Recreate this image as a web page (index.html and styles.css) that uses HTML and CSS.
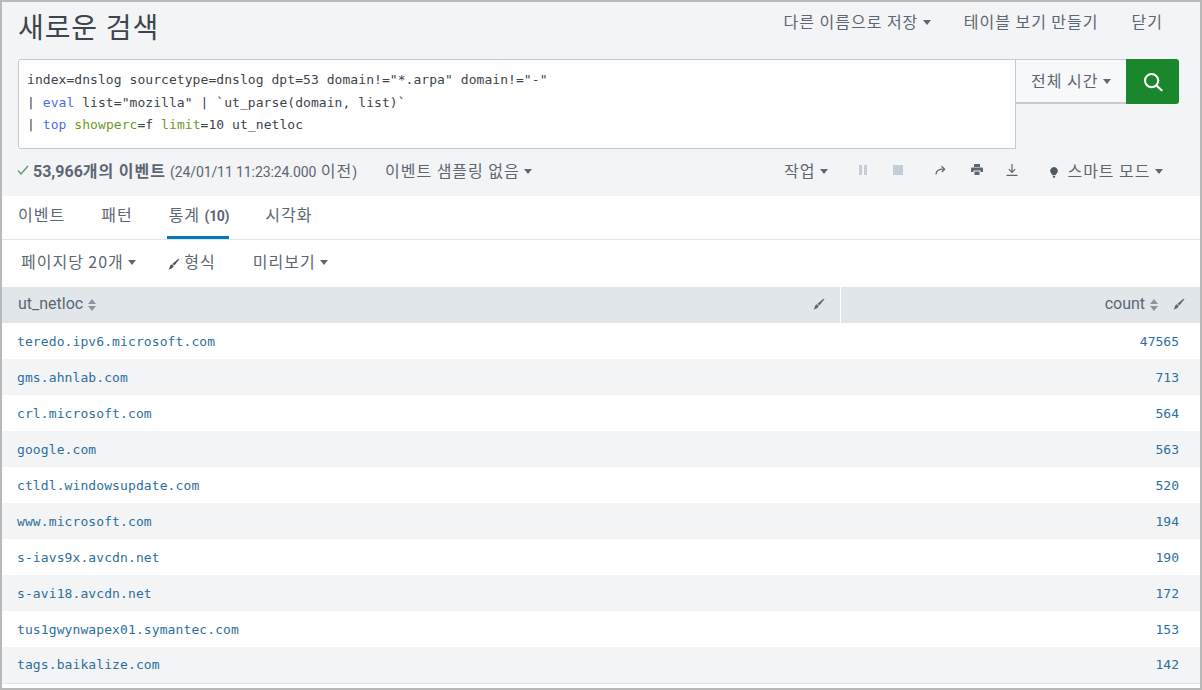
FILE: index.html
```html
<!DOCTYPE html>
<html lang="ko">
<head>
<meta charset="utf-8">
<title>새로운 검색</title>
<link rel="stylesheet" href="styles.css">
</head>
<body>
<div class="frame">
  <section class="top">
    <header class="title-row">
      <h1 class="title">새로운 검색</h1>
      <nav class="title-menu">
        <span class="menu-item">다른 이름으로 저장 <i class="caret"></i></span>
        <span class="menu-item">테이블 보기 만들기</span>
        <span class="menu-item">닫기</span>
      </nav>
    </header>
    <div class="search-row">
      <div class="query">
        <div class="qline">index=dnslog sourcetype=dnslog dpt=53 domain!="*.arpa" domain!="-"</div>
        <div class="qline">| <span class="kw">eval</span> list="mozilla" | `ut_parse(domain, list)`</div>
        <div class="qline">| <span class="kw">top</span> <span class="arg">showperc</span>=f <span class="arg">limit</span>=10 ut_netloc</div>
      </div>
      <div class="time-btn">전체 시간 <i class="caret"></i></div>
      <div class="go-btn">
        <svg width="20" height="20" viewBox="0 0 20 20" fill="none" stroke="#fff" stroke-width="2.2" stroke-linecap="round"><circle cx="8.6" cy="8.6" r="6.6"/><path d="M13.6 13.6 18.6 18.2"/></svg>
      </div>
    </div>
    <div class="status-row">
      <div class="status-left">
        <svg class="check" width="12" height="10" viewBox="0 0 12 10" fill="none" stroke="#5a9a62" stroke-width="1.3"><path d="M1 5.5 4 9 11 1"/></svg>
        <b class="count"><span class="en">53,966</span>개의 이벤트</b>
        <span class="stamp"><span class="en">(24/01/11 11:23:24.000</span> 이전<span class="en">)</span></span>
        <span class="sampling">이벤트 샘플링 없음 <i class="caret"></i></span>
      </div>
      <div class="status-right">
        <span class="job">작업 <i class="caret"></i></span>
        <svg class="tool t-pause" width="10" height="10" viewBox="0 0 10 10" fill="#c3cdd7"><rect x="1" y="0" width="3" height="10"/><rect x="6" y="0" width="3" height="10"/></svg>
        <svg class="tool t-stop" width="10" height="10" viewBox="0 0 10 10" fill="#c3cdd7"><rect width="10" height="10"/></svg>
        <svg class="tool t-share" width="11" height="10" viewBox="0 0 11 10" fill="none" stroke="#5c6773" stroke-width="1.3"><path d="M1 9.5C1 6 3.500 4.200 8.500 4.200"/><path d="M6.500 1.300 9.600 4.200 6.800 7" /></svg>
        <svg class="tool t-print" width="12" height="11" viewBox="0 0 12 11" fill="#5c6773"><path d="M3 0h6v3H3zM1 3.500h10a1 1 0 0 1 1 1V8h-2.500V6.500h-7V8H0V4.500a1 1 0 0 1 1-1zM3.500 7.500h5V11h-5z"/></svg>
        <svg class="tool t-down" width="12" height="12" viewBox="0 0 12 12" fill="none" stroke="#5c6773" stroke-width="1.200"><path d="M6 0v8M2.800 5.200 6 8.500l3.200-3.300M0.500 11.300h11"/></svg>
        <span class="mode">
          <svg width="8" height="11" viewBox="0 0 8 11" fill="#4e5863"><path d="M4 0a3.800 3.800 0 0 1 2.200 6.900L5.500 8h-3l-.7-1.100A3.800 3.800 0 0 1 4 0zM2.700 8.800h2.600L4.800 10.800H3.200z"/></svg>
          스마트 모드 <i class="caret"></i>
        </span>
      </div>
    </div>
  </section>

  <nav class="tabs">
    <span class="tab">이벤트</span>
    <span class="tab">패턴</span>
    <span class="tab active">통계 <b class="en tab-num">(10)</b></span>
    <span class="tab">시각화</span>
  </nav>

  <div class="controls">
    <span class="ctl">페이지당 20개 <i class="caret"></i></span>
    <span class="ctl ctl-format">
      <svg class="brush" width="12" height="12" viewBox="0 0 12 12" fill="#4e5863"><path d="M11.500.5c.4.4-3.500 5.200-5.300 6.900L4.600 5.800C6.300 4 11.100.1 11.500.500zM4.100 6.300l1.600 1.600C5.300 9.800 3 11 .5 11.500c1.300-1 1-2.600 1.800-3.900.4-.7 1.100-1 1.800-1.300z"/></svg>형식</span>
    <span class="ctl ctl-preview">미리보기 <i class="caret"></i></span>
  </div>

  <table class="grid">
    <colgroup><col class="col-a"><col></colgroup>
    <thead>
      <tr>
        <th class="th-left">
          <div class="th-inner"><span>ut_netloc <i class="sort"></i></span>
          <svg class="brush" width="12" height="12" viewBox="0 0 12 12" fill="#5c6773"><path d="M11.500.5c.4.4-3.500 5.200-5.300 6.900L4.600 5.800C6.300 4 11.100.1 11.500.500zM4.100 6.300l1.600 1.600C5.300 9.800 3 11 .5 11.500c1.300-1 1-2.600 1.800-3.900.4-.7 1.100-1 1.800-1.300z"/></svg></div>
        </th>
        <th class="th-right">
          <div class="th-inner th-end"><span>count <i class="sort"></i></span>
          <svg class="brush" width="12" height="12" viewBox="0 0 12 12" fill="#5c6773"><path d="M11.500.5c.4.4-3.500 5.200-5.300 6.900L4.600 5.800C6.300 4 11.100.1 11.500.500zM4.100 6.300l1.600 1.600C5.300 9.800 3 11 .5 11.500c1.300-1 1-2.600 1.800-3.900.4-.7 1.100-1 1.800-1.300z"/></svg></div>
        </th>
      </tr>
    </thead>
    <tbody>
      <tr><td>teredo.ipv6.microsoft.com</td><td class="num">47565</td></tr>
      <tr><td>gms.ahnlab.com</td><td class="num">713</td></tr>
      <tr><td>crl.microsoft.com</td><td class="num">564</td></tr>
      <tr><td>google.com</td><td class="num">563</td></tr>
      <tr><td>ctldl.windowsupdate.com</td><td class="num">520</td></tr>
      <tr><td>www.microsoft.com</td><td class="num">194</td></tr>
      <tr><td>s-iavs9x.avcdn.net</td><td class="num">190</td></tr>
      <tr><td>s-avi18.avcdn.net</td><td class="num">172</td></tr>
      <tr><td>tus1gwynwapex01.symantec.com</td><td class="num">153</td></tr>
      <tr><td>tags.baikalize.com</td><td class="num">142</td></tr>
    </tbody>
  </table>
</div>
</body>
</html>
```
FILE: styles.css
```css
* { box-sizing: border-box; }
html, body { margin: 0; padding: 0; background: #fff; }
body {
  width: 1202px;
  height: 690px;
  overflow: hidden;
  font-family: "Noto Sans CJK KR", sans-serif;
  font-size: 16px;
  letter-spacing: 1px;
  word-spacing: -1px;
  color: #5c6773;
}
.en { font-family: Roboto, sans-serif; font-size: 14px; letter-spacing: 0; word-spacing: 0; }
.frame {
  width: 1202px;
  height: 690px;
  border: 2px solid #b9b9b9;
  background: #fff;
  overflow: hidden;
}
.top { background: #f2f4f5; height: 194px; }
.title-row {
  display: flex;
  justify-content: space-between;
  align-items: flex-start;
  height: 57px;
  padding: 0 37px 0 16px;
}
.title {
  margin: 5px 0 0;
  font-size: 28px;
  line-height: 38px;
  font-weight: 400;
  letter-spacing: 0.900px;
  color: #3c444d;
}
.title-menu { display: flex; gap: 33px; margin-top: 8px; line-height: 22px; }
.caret {
  display: inline-block;
  width: 0;
  height: 0;
  border-left: 4.500px solid transparent;
  border-right: 4.500px solid transparent;
  border-top: 5px solid #5c6773;
  vertical-align: 3px;
}
.search-row { display: flex; align-items: flex-start; margin-left: 16px; }
.query {
  width: 998px;
  height: 90px;
  padding: 9px 8px;
  background: #fff;
  border: 1px solid #c3cbd4;
  border-radius: 3px 0 0 3px;
  font-family: "DejaVu Sans Mono", monospace;
  font-size: 13px;
  letter-spacing: 0.060px;
  word-spacing: 0;
  line-height: 22.500px;
  color: #3c444d;
}
.qline { white-space: nowrap; }
.kw { color: #4f6bed; }
.arg { color: #6b9a1e; }
.time-btn {
  width: 110px;
  height: 45px;
  line-height: 40px;
  text-align: center;
  background: #f7f8fa;
  border-bottom: 2px solid #c3cbd4;
  border-top: 1px solid #c3cbd4;
}
.go-btn {
  width: 53px;
  height: 45px;
  background: #1a872c;
  border-radius: 0 3px 3px 0;
  display: flex;
  align-items: center;
  justify-content: center;
}
.status-row {
  display: flex;
  justify-content: space-between;
  align-items: center;
  height: 41px;
  padding: 0 37px 0 15px;
}
.status-left, .status-right { display: flex; align-items: center; }
.check { margin-right: 4px; }
.count { font-weight: 700; color: #5c6773; }
.count .en { font-weight: 700; font-size: 16px; }
.stamp { margin-left: 4px; }
.stamp .en { letter-spacing: -0.090px; }
.sampling { margin-left: 28px; }
.tool { flex: none; }
.t-pause { margin-left: 30px; }
.t-stop { margin-left: 25px; }
.t-share { margin-left: 32px; }
.t-print { margin-left: 25px; }
.t-down { margin-left: 23px; }
.mode { margin-left: 32px; }
.mode svg { margin-right: 5px; vertical-align: -1px; }
.tabs {
  display: flex;
  height: 44px;
  padding-left: 16px;
  border-bottom: 1px solid #e1e6eb;
  gap: 36px;
}
.tab { height: 43px; line-height: 36px; }
.tab.active {
  border-bottom: 3px solid #0877bd;
  padding-left: 2px;
  margin-left: -2px;
}
.tab-num { font-weight: 700; letter-spacing: -0.300px; }
.controls {
  display: flex;
  align-items: center;
  height: 47px;
  padding: 0 0 5px 19px;
}
.ctl-format { margin-left: 32px; }
.ctl-format .brush { margin-right: 4px; vertical-align: -2px; }
.ctl-preview { margin-left: 37px; }
.grid { width: 1198px; border-collapse: collapse; table-layout: fixed; }
.col-a { width: 838px; }
.grid th {
  height: 36px;
  padding: 0;
  background: #e1e6eb;
  font-family: Roboto, sans-serif;
  font-weight: 400;
  font-size: 16px;
  letter-spacing: 0;
  word-spacing: 0;
  text-align: left;
}
.th-left { border-right: 1px solid #fff; }
.th-inner { display: flex; justify-content: space-between; align-items: center; padding: 0 15px 3px 16px; }
.th-end { justify-content: flex-end; gap: 15px; }
.sort {
  display: inline-block;
  width: 0;
  height: 0;
  position: relative;
  border-left: 4px solid transparent;
  border-right: 4px solid transparent;
  border-bottom: 5px solid #8a95a1;
  vertical-align: 5px;
  margin-left: 1px;
}
.sort::after {
  content: "";
  position: absolute;
  left: -4px;
  top: 7px;
  border-left: 4px solid transparent;
  border-right: 4px solid transparent;
  border-top: 5px solid #8a95a1;
}
.grid td {
  height: 36px;
  padding: 0 21px 0 15px;
  font-family: "DejaVu Sans Mono", monospace;
  font-size: 13px;
  letter-spacing: 0.100px;
  word-spacing: 0;
  color: #2e6f9e;
}
.grid tbody tr:nth-child(even) td { background: #f2f4f5; }
.grid tbody tr:last-child td { border-bottom: 1px solid #e1e6eb; }
.grid td.num { text-align: right; letter-spacing: 0; }
```
